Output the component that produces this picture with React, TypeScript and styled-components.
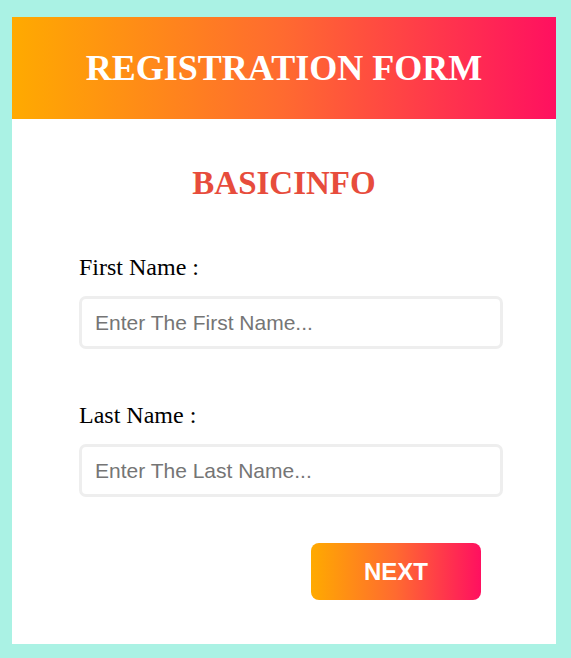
import React from "react";
import styled, { createGlobalStyle } from "styled-components";

const Global = createGlobalStyle`
  html, body { margin: 0; padding: 0; }
  body {
    background: #aaf2e4;
    font-family: "Liberation Serif", "Times New Roman", serif;
    width: 571px;
    height: 658px;
    overflow: hidden;
  }
`;

const Page = styled.div`
  padding: 17px 15px 14px 12px;
`;

const Card = styled.div`
  width: 544px;
  height: 627px;
  background: #ffffff;
  display: flex;
  flex-direction: column;
`;

const Header = styled.div`
  height: 102px;
  background: linear-gradient(to right, #ffaa00, #ff6a30 50%, #ff1060);
  display: flex;
  align-items: center;
  justify-content: center;
`;

const Title = styled.h1`
  margin: 0;
  color: #ffffff;
  font-family: "Liberation Serif", "Times New Roman", serif;
  font-weight: bold;
  font-size: 36px;
`;

const Section = styled.h2`
  margin: 44px 0 0;
  text-align: center;
  color: #e74c3c;
  font-family: "Liberation Serif", "Times New Roman", serif;
  font-weight: bold;
  font-size: 33px;
  line-height: 40px;
`;

const Fields = styled.div`
  padding: 0 53px 0 67px;
  display: flex;
  flex-direction: column;
`;

const Field = styled.div<{ $top: number }>`
  margin-top: ${(p) => p.$top}px;
  display: flex;
  flex-direction: column;
`;

const Label = styled.label`
  font-size: 24px;
  line-height: 28px;
  color: #000;
`;

const Input = styled.input`
  box-sizing: border-box;
  margin-top: 15px;
  width: 424px;
  height: 53px;
  border: 3px solid #eeeeee;
  border-radius: 7px;
  padding: 0 13px;
  font-family: "Liberation Sans", Arial, sans-serif;
  font-size: 21px;
  color: #333;
  outline: none;
  &::placeholder { color: #757575; }
`;

const Actions = styled.div`
  display: flex;
  justify-content: flex-end;
  margin-top: 46px;
  padding-right: 22px;
`;

const NextButton = styled.button`
  width: 170px;
  height: 57px;
  border: none;
  border-radius: 8px;
  background: linear-gradient(to right, #ffaa00, #ff6a30 50%, #ff1060);
  color: #fff;
  font-family: "Liberation Sans", Arial, sans-serif;
  font-weight: bold;
  font-size: 24px;
  cursor: pointer;
`;

export default function App() {
  return (
    <Page>
      <Global />
      <Card>
        <Header>
          <Title>REGISTRATION FORM</Title>
        </Header>
        <Section>BASICINFO</Section>
        <Fields>
          <Field $top={50}>
            <Label>First Name :</Label>
            <Input placeholder="Enter The First Name..." />
          </Field>
          <Field $top={52}>
            <Label>Last Name :</Label>
            <Input placeholder="Enter The Last Name..." />
          </Field>
          <Actions>
            <NextButton>NEXT</NextButton>
          </Actions>
        </Fields>
      </Card>
    </Page>
  );
}
